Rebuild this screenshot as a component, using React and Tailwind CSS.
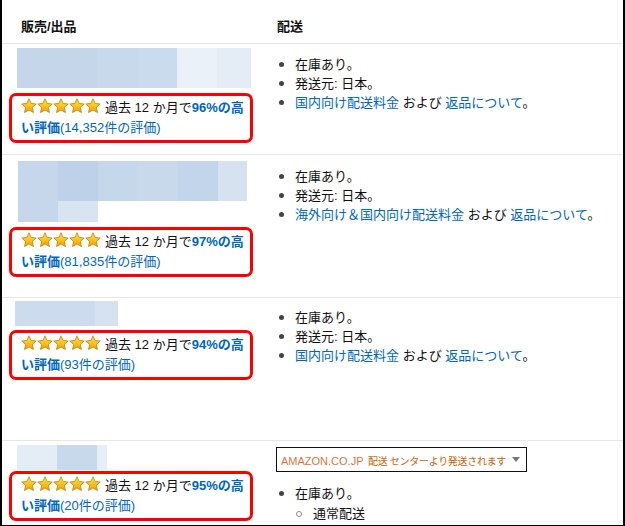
import React from "react";

const FONT = { fontFamily: '"Liberation Sans", Arial, "Noto Sans CJK JP", sans-serif' };

function Star({ id }) {
  return (
    <svg width="16" height="16" viewBox="0 0 24 24" className="block">
      <defs>
        <linearGradient id={id} x1="0" y1="0" x2="0" y2="1">
          <stop offset="0" stopColor="#ffe36b" />
          <stop offset="0.55" stopColor="#f9c21a" />
          <stop offset="1" stopColor="#f09a05" />
        </linearGradient>
      </defs>
      <polygon
        points="12,1.2 15.2,8.2 22.8,9 17.1,14.2 18.7,21.8 12,17.9 5.3,21.8 6.9,14.2 1.2,9 8.8,8.2"
        fill={`url(#${id})`}
        stroke="#c9860a"
        strokeWidth="1.3"
        strokeLinejoin="round"
      />
    </svg>
  );
}

function Stars({ k }) {
  return (
    <span className="inline-flex align-[-2px] mr-[4px]">
      {[0, 1, 2, 3, 4].map((i) => (
        <Star key={i} id={`g${k}${i}`} />
      ))}
    </span>
  );
}

function RatingBox({ k, pct, count, mt }) {
  return (
    <div
      className={`ml-[7px] w-[244px] h-[50px] border-[3px] border-[#ff0000] rounded-[7px] px-[9px] py-[2px] text-[13px] leading-[20px] text-[#111] ${mt}`}
    >
      <div className="whitespace-nowrap">
        <Stars k={k} />
        過去 12 か月で<span className="font-bold text-[#0066c0]">{pct}%の高</span>
      </div>
      <div className="whitespace-nowrap text-[#0066c0]">
        <span className="font-bold">い評価</span>({count}件の評価)
      </div>
    </div>
  );
}

function Bullet({ children }) {
  return (
    <div className="flex items-center h-[19px] leading-[19px]">
      <span className="w-[18px] flex">
        <span className="ml-[2px] w-[5px] h-[5px] rounded-full bg-[#444]" />
      </span>
      <span>{children}</span>
    </div>
  );
}

function Delivery({ first }) {
  return (
    <div className="text-[13px] text-[#111]">
      <Bullet>在庫あり。</Bullet>
      <Bullet>発送元: 日本。</Bullet>
      <Bullet>
        <span className="text-[#0066c0]">{first}</span> および{" "}
        <span className="text-[#0066c0]">返品について</span>。
      </Bullet>
    </div>
  );
}

function Blocks({ rows }) {
  return (
    <div className="flex flex-col">
      {rows.map((r, i) => (
        <div key={i} className="flex">
          {r.map(([w, h, c], j) => (
            <div key={j} className={`${w} ${h} ${c}`} />
          ))}
        </div>
      ))}
    </div>
  );
}

export default function App() {
  return (
    <div
      style={FONT}
      className="w-[625px] h-[526px] bg-white border-l-2 border-r-2 border-b border-black overflow-hidden"
    >
      {/* header */}
      <div className="flex h-[44px] border-b border-[#e7e7e7] text-[13px] font-bold text-[#111] leading-[20px] pt-[17px]">
        <div className="w-[275px] pl-[19px]">販売/出品</div>
        <div>配送</div>
      </div>

      {/* row 1 */}
      <div className="flex h-[111px] border-b border-[#e7e7e7]">
        <div className="w-[275px] pt-[4px]">
          <div className="ml-[15px]">
            <Blocks
              rows={[
                [
                  ["w-[80px]", "h-[40px]", "bg-[#c5d6ea]"],
                  ["w-[40px]", "h-[40px]", "bg-[#c8d9ec]"],
                  ["w-[40px]", "h-[40px]", "bg-[#cbdbee]"],
                  ["w-[40px]", "h-[40px]", "bg-[#ebf1f9]"],
                  ["w-[34px]", "h-[40px]", "bg-[#e4ecf6]"],
                ],
              ]}
            />
          </div>
          <RatingBox k="a" pct="96" count="14,352" mt="mt-[5px]" />
        </div>
        <div className="flex-1 pt-[11px]">
          <Delivery first="国内向け配送料金" />
        </div>
      </div>

      {/* row 2 */}
      <div className="flex h-[143px] border-b border-[#e7e7e7]">
        <div className="w-[275px] pt-[6px]">
          <div className="ml-[16px]">
            <Blocks
              rows={[
                [
                  ["w-[40px]", "h-[40px]", "bg-[#c6d7eb]"],
                  ["w-[40px]", "h-[40px]", "bg-[#bdd1e8]"],
                  ["w-[40px]", "h-[40px]", "bg-[#c5d7eb]"],
                  ["w-[40px]", "h-[40px]", "bg-[#c8d9ec]"],
                  ["w-[40px]", "h-[40px]", "bg-[#c2d5ea]"],
                  ["w-[29px]", "h-[40px]", "bg-[#d6e2f0]"],
                ],
                [
                  ["w-[40px]", "h-[21px]", "bg-[#c6d7eb]"],
                  ["w-[40px]", "h-[21px]", "bg-[#d9e4f1]"],
                ],
              ]}
            />
          </div>
          <RatingBox k="b" pct="97" count="81,835" mt="mt-[5px]" />
        </div>
        <div className="flex-1 pt-[12px]">
          <Delivery first="海外向け＆国内向け配送料金" />
        </div>
      </div>

      {/* row 3 */}
      <div className="flex h-[143px] border-b border-[#e7e7e7]">
        <div className="w-[275px] pt-[3px]">
          <div className="ml-[13px]">
            <Blocks
              rows={[
                [
                  ["w-[80px]", "h-[25px]", "bg-[#ccdcee]"],
                  ["w-[23px]", "h-[25px]", "bg-[#d6e2f0]"],
                ],
              ]}
            />
          </div>
          <RatingBox k="c" pct="94" count="93" mt="mt-[4px]" />
        </div>
        <div className="flex-1 pt-[10px]">
          <Delivery first="国内向け配送料金" />
        </div>
      </div>

      {/* row 4 */}
      <div className="flex">
        <div className="w-[275px] pt-[4px]">
          <div className="ml-[15px]">
            <Blocks
              rows={[
                [
                  ["w-[40px]", "h-[25px]", "bg-[#e4ecf6]"],
                  ["w-[40px]", "h-[25px]", "bg-[#c9d9ec]"],
                  ["w-[10px]", "h-[25px]", "bg-[#e6eef7]"],
                ],
              ]}
            />
          </div>
          <RatingBox k="d" pct="95" count="20" mt="mt-[1px]" />
        </div>
        <div className="flex-1 pt-[6px]">
          <div className="-ml-px w-[251px] h-[25px] border border-[#111] flex items-center pl-[4px] pr-[6px] text-[#c8620a]">
            <span className="flex-1 min-w-0 overflow-hidden whitespace-nowrap">
              <span className="text-[11px] text-[#e0733c]">AMAZON.CO.JP</span>{" "}
              <span className="text-[10px] tracking-[-0.3px]">配送 センターより発送されます</span>
            </span>
            <span className="shrink-0 w-0 h-0 border-l-[4px] border-r-[4px] border-t-[5px] border-l-transparent border-r-transparent border-t-[#777]" />
          </div>
          <div className="mt-[12px] text-[13px] text-[#111]">
            <Bullet>在庫あり。</Bullet>
            <div className="flex items-center h-[19px] leading-[19px] mt-px">
              <span className="w-[36px] flex">
                <span className="ml-[19px] w-[6px] h-[6px] rounded-full border border-[#888]" />
              </span>
              <span>通常配送</span>
            </div>
          </div>
        </div>
      </div>
    </div>
  );
}
